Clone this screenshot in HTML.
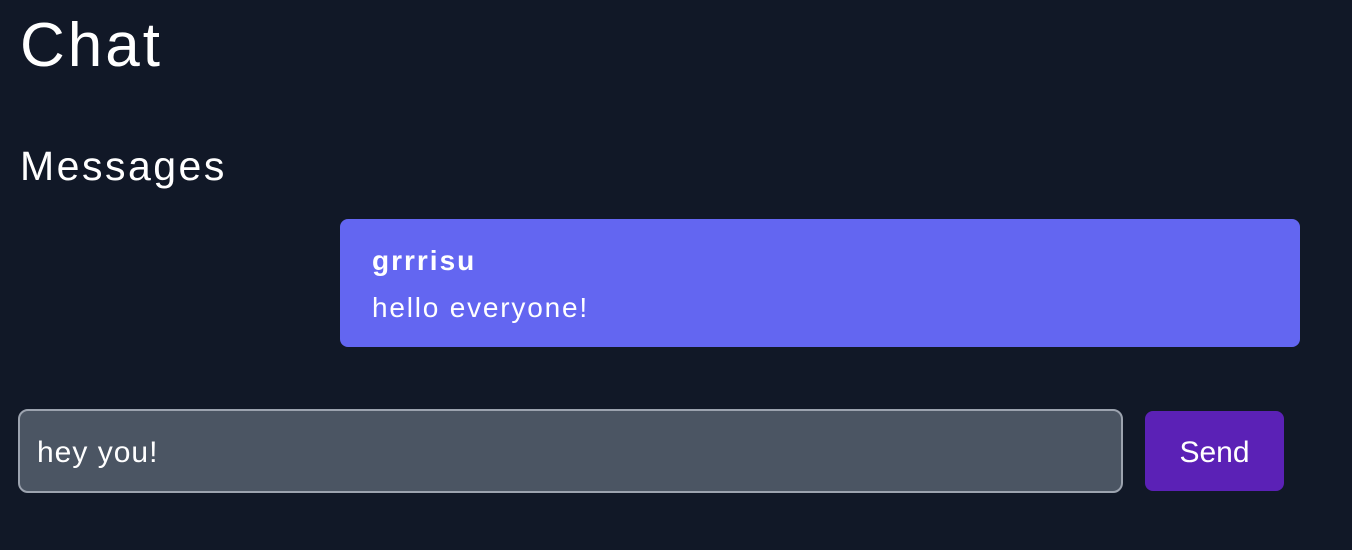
<!DOCTYPE html>
<html><head><style>
body{margin:0;background:#111827;width:1352px;height:550px;overflow:hidden;font-family:"Liberation Sans",sans-serif;color:#fff;position:relative}
.a{position:absolute}
</style></head><body>
<div class="a" style="left:20px;top:11px;font-size:62px;line-height:70px;letter-spacing:3px">Chat</div>
<div class="a" style="left:20px;top:141px;font-size:41px;line-height:50px;letter-spacing:2.5px">Messages</div>
<div class="a" style="left:340px;top:219px;width:960px;height:128px;background:#6366f1;border-radius:8px">
<div class="a" style="left:32px;top:25px;font-size:28px;font-weight:bold;line-height:34px;letter-spacing:2px">grrrisu</div>
<div class="a" style="left:32px;top:72px;font-size:28px;line-height:34px;letter-spacing:1.8px">hello everyone!</div>
</div>
<div class="a" style="left:18px;top:409px;width:1101px;height:80px;background:#4b5563;border:2px solid #9ca3af;border-radius:10px">
<div class="a" style="left:17px;top:25px;font-size:30px;line-height:34px;letter-spacing:1px">hey you!</div>
</div>
<div class="a" style="left:1145px;top:411px;width:139px;height:80px;background:#5b21b6;border-radius:8px;font-size:30px;line-height:84px;text-align:center">Send</div>
</body></html>
